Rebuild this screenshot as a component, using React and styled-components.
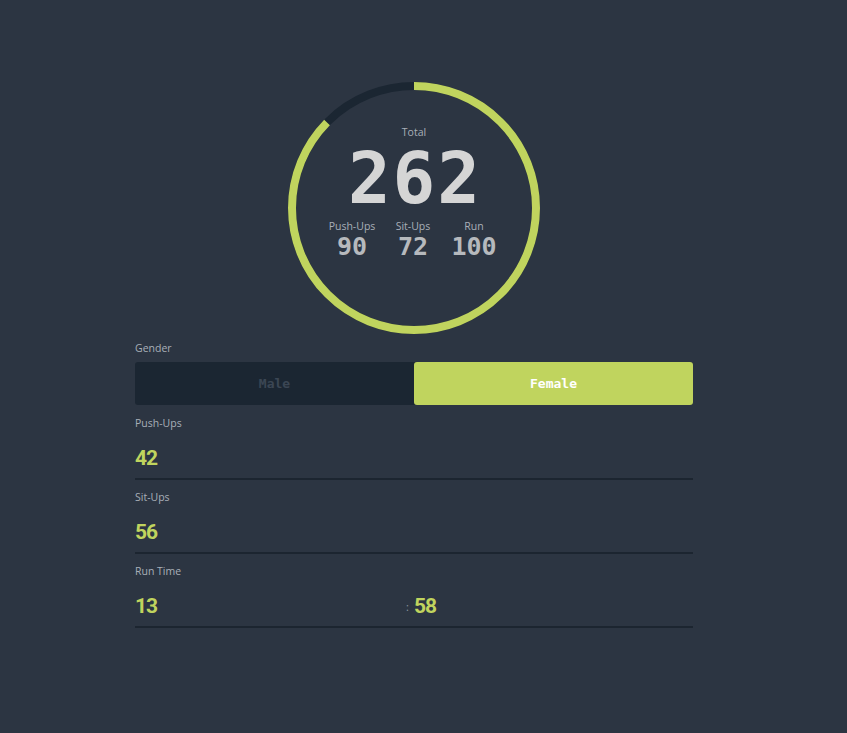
import React from "react";
import styled, { createGlobalStyle } from "styled-components";

const Global = createGlobalStyle`
  html, body { margin: 0; padding: 0; background: #2c3542; }
  body { font-family: "Open Sans", "Noto Sans", sans-serif; }
`;

const GREEN = "#c0d45e";
const DARK = "#1b2632";

const Page = styled.div`
  min-height: 733px;
  box-sizing: border-box;
  padding: 82px 19px 0 0;
  display: flex;
  flex-direction: column;
  align-items: center;
`;

const Gauge = styled.div`
  position: relative;
  width: 252px;
  height: 252px;
`;

const GaugeSvg = styled.svg`
  display: block;
`;

const GaugeContent = styled.div`
  position: absolute;
  inset: 0;
  display: flex;
  flex-direction: column;
  align-items: center;
  padding-top: 43px;
  box-sizing: border-box;
`;

const SmallLabel = styled.div`
  font-family: "Open Sans", sans-serif;
  font-size: 10.5px;
  line-height: 14px;
  color: #a8afb8;
`;

const TotalValue = styled.div`
  font-family: "DejaVu Sans Mono", monospace;
  font-weight: bold;
  font-size: 71px;
  line-height: 70px;
  letter-spacing: 2px;
  margin-left: 2px;
  color: #d5d5d5;
  margin-top: 5px;
`;

const Subs = styled.div`
  display: grid;
  grid-template-columns: repeat(3, 61px);
  margin-top: 5px;
  margin-right: 2px;
`;

const Sub = styled.div`
  display: flex;
  flex-direction: column;
  align-items: center;
`;

const SubValue = styled.div`
  font-family: "DejaVu Sans Mono", monospace;
  font-weight: bold;
  font-size: 25px;
  line-height: 25px;
  color: #b6b9bd;
  margin-top: 1px;
`;

const Form = styled.div`
  width: 558px;
  display: flex;
  flex-direction: column;
  margin-top: 7px;
`;

const FieldLabel = styled.div`
  font-family: "Open Sans", sans-serif;
  font-size: 10.5px;
  line-height: 14px;
  color: #a8afb8;
  margin-top: ${(p) => p.$mt || 0}px;
`;

const Toggle = styled.div`
  display: grid;
  grid-template-columns: 1fr 1fr;
  height: 43px;
  margin-top: 7px;
  background: ${DARK};
  border-radius: 3px;
`;

const ToggleButton = styled.button`
  border: none;
  border-radius: 3px;
  cursor: pointer;
  font-family: "DejaVu Sans Mono", monospace;
  font-weight: bold;
  font-size: 13px;
  padding: 0;
  background: ${(p) => (p.$active ? GREEN : "transparent")};
  color: ${(p) => (p.$active ? "#ffffff" : "#3b4654")};
`;

const InputRow = styled.div`
  display: grid;
  grid-template-columns: ${(p) => (p.$split ? "1fr 1fr" : "1fr")};
  height: 48px;
  border-bottom: 2px solid #1c2530;
`;

const Cell = styled.div`
  display: flex;
  align-items: center;
  padding-top: 8px;
`;

const Colon = styled.span`
  font-family: "Open Sans", sans-serif;
  font-size: 11px;
  color: #8d959f;
  margin-left: -8px;
  width: 8px;
`;

const ValueInput = styled.input`
  background: transparent;
  border: none;
  outline: none;
  padding: 0;
  width: 100%;
  font-family: Roboto, sans-serif;
  font-weight: bold;
  font-size: 21px;
  letter-spacing: -1px;
  color: ${GREEN};
`;

const R = 122;
const C = 2 * Math.PI * R;
const total = 262;
const max = 300;

export default function App() {
  const frac = total / max;
  return (
    <>
      <Global />
      <Page>
        <Gauge>
          <GaugeSvg width="252" height="252" viewBox="0 0 252 252">
            <circle cx="126" cy="126" r={R} fill="none" stroke={DARK} strokeWidth="8" />
            <circle
              cx="126"
              cy="126"
              r={R}
              fill="none"
              stroke={GREEN}
              strokeWidth="8"
              strokeDasharray={`${C * frac} ${C}`}
              transform="rotate(-90 126 126)"
            />
          </GaugeSvg>
          <GaugeContent>
            <SmallLabel>Total</SmallLabel>
            <TotalValue>262</TotalValue>
            <Subs>
              <Sub>
                <SmallLabel>Push-Ups</SmallLabel>
                <SubValue>90</SubValue>
              </Sub>
              <Sub>
                <SmallLabel>Sit-Ups</SmallLabel>
                <SubValue>72</SubValue>
              </Sub>
              <Sub>
                <SmallLabel>Run</SmallLabel>
                <SubValue>100</SubValue>
              </Sub>
            </Subs>
          </GaugeContent>
        </Gauge>
        <Form>
          <FieldLabel>Gender</FieldLabel>
          <Toggle>
            <ToggleButton>Male</ToggleButton>
            <ToggleButton $active>Female</ToggleButton>
          </Toggle>
          <FieldLabel $mt={11}>Push-Ups</FieldLabel>
          <InputRow>
            <Cell>
              <ValueInput defaultValue="42" />
            </Cell>
          </InputRow>
          <FieldLabel $mt={10}>Sit-Ups</FieldLabel>
          <InputRow>
            <Cell>
              <ValueInput defaultValue="56" />
            </Cell>
          </InputRow>
          <FieldLabel $mt={10}>Run Time</FieldLabel>
          <InputRow $split>
            <Cell>
              <ValueInput defaultValue="13" />
            </Cell>
            <Cell>
              <Colon>:</Colon>
              <ValueInput defaultValue="58" />
            </Cell>
          </InputRow>
        </Form>
      </Page>
    </>
  );
}
